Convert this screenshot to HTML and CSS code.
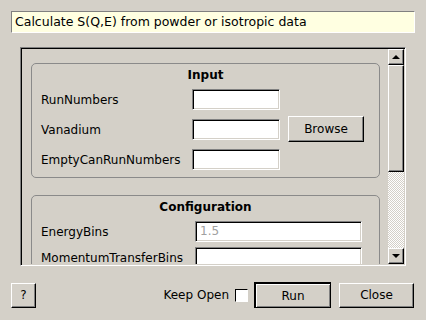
FILE: index.html
```html
<!doctype html>
<html>
<head>
  <link rel="stylesheet" href="styles.css">
</head>
<body>
  <div class="dialog">
    <div class="summary">Calculate S(Q,E) from powder or isotropic data</div>

    <div class="scrollFrame">
      <div class="viewport">
        <div class="group">
          <div class="groupTitle">Input</div>
          <div class="rows inputRows">
            <span class="label">RunNumbers</span>
            <span class="field"></span>
            <span></span>
            <span class="label">Vanadium</span>
            <span class="field"></span>
            <button class="btn browse">Browse</button>
            <span class="label">EmptyCanRunNumbers</span>
            <span class="field"></span>
            <span></span>
          </div>
        </div>
        <div class="group">
          <div class="groupTitle">Configuration</div>
          <div class="rows configRows">
            <span class="label">EnergyBins</span>
            <span class="field wide"><span class="hint">1.5</span></span>
            <span class="label">MomentumTransferBins</span>
            <span class="field wide"></span>
          </div>
        </div>
      </div>
      <div class="scrollbar">
        <div class="arrowBtn"><span class="arrow up"></span></div>
        <div class="thumb"></div>
        <div class="track"></div>
        <div class="arrowBtn"><span class="arrow down"></span></div>
      </div>
    </div>

    <div class="bottomBar">
      <button class="btn help">?</button>
      <div class="spacer"></div>
      <span class="keepOpen">Keep Open</span>
      <span class="checkbox"></span>
      <button class="btn run">Run</button>
      <button class="btn close">Close</button>
    </div>
  </div>
</body>
</html>
```

FILE: styles.css
```css
body{
  margin: 0;
  background: #d4d0c8;
  font-family: "DejaVu Sans", sans-serif;
  font-size: 12px;
  color: #000;
}
.dialog{
  padding: 11px;
}
.summary{
  height: 20px;
  line-height: 20px;
  padding-left: 3px;
  background: #ffffe1;
  border: 1px solid;
  border-color: #808080 #fff #fff #808080;
  font-size: 12.5px;
}
.scrollFrame{
  display: flex;
  margin: 14px 0 0 9px;
  width: 382px;
  height: 215px;
  border: 1px solid;
  border-color: #808080 #fff #fff #808080;
  box-shadow: inset 1px 1px #000, inset -1px -1px #d4d0c8;
  padding: 1px;
}
.viewport{
  width: 366px;
  overflow: hidden;
  padding: 14px 8px 0 9px;
  box-sizing: border-box;
}
.group{
  border: 1px solid #8a8a8a;
  border-radius: 5px;
  padding: 4px 9px 7px 9px;
  margin-bottom: 17px;
}
.groupTitle{
  font-weight: bold;
  text-align: center;
  line-height: 15px;
  margin-bottom: 6px;
}
.rows{
  display: grid;
  align-items: center;
  grid-auto-rows: 21px;
}
.inputRows{
  grid-template-columns: 151px 88px auto;
  row-gap: 9px;
}
.configRows{
  grid-template-columns: 154px 167px;
  row-gap: 5px;
}
.label{
  white-space: nowrap;
}
.field{
  display: block;
  height: 17px;
  background: #fff;
  border: 1px solid;
  border-color: #808080 #fff #fff #808080;
  box-shadow: inset 1px 1px #000, inset -1px -1px #d4d0c8;
  padding: 1px 4px;
  line-height: 17px;
}
.hint{
  color: #a0a0a0;
}
.btn{
  font-family: "DejaVu Sans", sans-serif;
  font-size: 12px;
  color: #000;
  background: #d4d0c8;
  border: 1px solid;
  border-color: #fff #000 #000 #fff;
  box-shadow: inset -1px -1px #808080;
  padding: 0;
  margin: 0;
}
.browse{
  width: 76px;
  height: 26px;
  margin: -3px 0 -2px 8px;
}
.scrollbar{
  width: 16px;
  display: flex;
  flex-direction: column;
}
.arrowBtn{
  height: 16px;
  box-sizing: border-box;
  border: 1px solid;
  border-color: #fff #000 #000 #fff;
  box-shadow: inset -1px -1px #808080;
  display: flex;
  align-items: center;
  justify-content: center;
}
.arrow{
  width: 0;
  height: 0;
  border-left: 4px solid transparent;
  border-right: 4px solid transparent;
}
.arrow.up{
  border-bottom: 4px solid #000;
}
.arrow.down{
  border-top: 4px solid #000;
}
.thumb{
  height: 107px;
  box-sizing: border-box;
  border: 1px solid;
  border-color: #fff #000 #000 #fff;
  box-shadow: inset -1px -1px #808080;
}
.track{
  flex: 1;
  background: repeating-conic-gradient(#fff 0 25%, #d4d0c8 0 50%) 0 0/2px 2px;
}
.bottomBar{
  display: flex;
  align-items: center;
  margin-top: 16px;
}
.help{
  width: 25px;
  height: 25px;
}
.spacer{
  flex: 1;
}
.keepOpen{
  margin-right: 6px;
}
.checkbox{
  width: 11px;
  height: 11px;
  background: #fff;
  border: 1px solid;
  border-color: #000 #fff #fff #000;
  box-shadow: 1px 1px 0 #d4d0c8;
  margin-right: 6px;
}
.run{
  width: 77px;
  height: 26px;
  border-width: 2px 1px 1px 2px;
  border-color: #000;
  box-shadow: inset 1px 1px #fff, inset -1px -1px #808080;
  margin-right: 8px;
}
.close{
  width: 75px;
  height: 25px;
  margin-right: 1px;
}
```
